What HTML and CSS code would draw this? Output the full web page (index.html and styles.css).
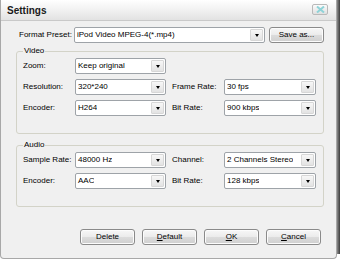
FILE: index.html
```html
<!DOCTYPE html>
<html>
<head>
<meta charset="utf-8">
<link rel="stylesheet" href="styles.css">
</head>
<body>
<div class="screen">
  <div class="window">
    <div class="titlebar">
      <span class="title">Settings</span>
      <span class="close">
        <svg width="9" height="7" viewBox="0 0 9 7"><path d="M1 0.5 L8 6.5 M8 0.5 L1 6.5" stroke="#8fd3d8" stroke-width="2"/></svg>
      </span>
    </div>
    <div class="content">
      <div class="preset-row">
        <span class="label preset-label">Format Preset:</span>
        <div class="combo preset-combo"><span class="val">iPod Video MPEG-4(*.mp4)</span><span class="arrow"></span></div>
        <div class="btn save-btn">Save as...</div>
      </div>

      <div class="group video">
        <span class="legend">Video</span>
        <div class="grid">
          <span class="label">Zoom:</span>
          <div class="combo"><span class="val">Keep original</span><span class="arrow"></span></div>
          <span></span><span></span>

          <span class="label">Resolution:</span>
          <div class="combo"><span class="val">320*240</span><span class="arrow"></span></div>
          <span class="label label2">Frame Rate:</span>
          <div class="combo"><span class="val">30 fps</span><span class="arrow"></span></div>

          <span class="label">Encoder:</span>
          <div class="combo"><span class="val">H264</span><span class="arrow"></span></div>
          <span class="label label2">Bit Rate:</span>
          <div class="combo"><span class="val">900 kbps</span><span class="arrow"></span></div>
        </div>
      </div>

      <div class="group audio">
        <span class="legend">Audio</span>
        <div class="grid">
          <span class="label">Sample Rate:</span>
          <div class="combo"><span class="val">48000 Hz</span><span class="arrow"></span></div>
          <span class="label label2">Channel:</span>
          <div class="combo"><span class="val">2 Channels Stereo</span><span class="arrow"></span></div>

          <span class="label">Encoder:</span>
          <div class="combo"><span class="val">AAC</span><span class="arrow"></span></div>
          <span class="label label2">Bit Rate:</span>
          <div class="combo"><span class="val">128 kbps</span><span class="arrow"></span></div>
        </div>
      </div>

      <div class="buttons">
        <div class="btn">Delete</div>
        <div class="btn"><u>D</u>efault</div>
        <div class="btn"><u>O</u>K</div>
        <div class="btn"><u>C</u>ancel</div>
      </div>
    </div>
  </div>
  <div class="edge"></div>
</div>
</body>
</html>
```

FILE: styles.css
```css
* { box-sizing: border-box; }
html, body { margin: 0; padding: 0; background: #ffffff; }
body {
  font-family: "Liberation Sans", Arial, sans-serif;
  font-size: 8px;
  color: #000;
  width: 340px;
  height: 261px;
  overflow: hidden;
}
.screen {
  display: flex;
  align-items: flex-start;
}
.window {
  width: 337px;
  height: 259px;
  background: #f0f0f0;
  border: 1px solid #a8a8a8;
  border-top: none;
  border-radius: 0 0 4px 4px;
  display: flex;
  flex-direction: column;
}
.edge {
  width: 3px;
  height: 254px;
  background: linear-gradient(to right, #8a8a8a, #3c3c3c);
}
.titlebar {
  height: 21px;
  background: linear-gradient(to bottom, #ffffff 0%, #f4f4f4 40%, #e2e2e2 100%);
  border-bottom: 1px solid #c9c9c9;
  display: flex;
  align-items: center;
  justify-content: space-between;
  padding: 0 8px 0 6px;
}
.title {
  font-weight: bold;
  font-size: 10px;
  color: #1a1a1a;
}
.close {
  width: 16px;
  height: 11px;
  border: 1px solid #b9b9b9;
  border-radius: 2px;
  background: linear-gradient(to bottom, #fbfbfb, #e0e0e0);
  display: flex;
  align-items: center;
  justify-content: center;
  margin-top: -1px;
}
.content {
  padding: 6px 0 0 15px;
  display: flex;
  flex-direction: column;
}
.preset-row {
  display: flex;
  align-items: center;
  height: 16px;
}
.label {
  line-height: 16px;
  white-space: nowrap;
}
.preset-label {
  width: 58px;
  padding-left: 3px;
}
.combo {
  height: 16px;
  background: #fff;
  border: 1px solid #9ea3a8;
  border-radius: 2px;
  display: flex;
  align-items: stretch;
  justify-content: space-between;
}
.combo .val {
  line-height: 14px;
  padding-left: 2px;
  white-space: nowrap;
  overflow: hidden;
}
.combo .arrow {
  width: 13px;
  margin: 1px;
  border: 1px solid #d7d7d7;
  border-radius: 1px;
  background: linear-gradient(to bottom, #f7f7f7, #e3e3e3);
  display: flex;
  align-items: center;
  justify-content: center;
}
.combo .arrow::after {
  content: "";
  width: 0;
  height: 0;
  border-left: 2.5px solid transparent;
  border-right: 2.5px solid transparent;
  border-top: 3px solid #000;
}
.preset-combo { width: 191px; }
.btn {
  width: 55px;
  height: 16px;
  border: 1px solid #8a8a8a;
  border-radius: 3px;
  background: linear-gradient(to bottom, #f7f7f7 0%, #ebebeb 50%, #dcdcdc 51%, #cfcfcf 100%);
  text-align: center;
  line-height: 14px;
  box-shadow: inset 0 0 0 1px #fcfcfc;
}
.save-btn {
  margin-left: 4px;
}
.group {
  width: 308px;
  border: 1px solid #d3d3c8;
  border-radius: 3px;
  display: flex;
  flex-direction: column;
  padding: 0 6px 0 6px;
}
.legend {
  align-self: flex-start;
  margin-top: -6px;
  margin-left: 0;
  padding: 0 1px;
  line-height: 10px;
  background: #f0f0f0;
}
.video {
  margin-top: 8px;
  height: 83px;
}
.audio {
  margin-top: 11px;
  height: 62px;
}
.grid {
  display: grid;
  grid-template-columns: 52px 91px 58px 92px;
  grid-auto-rows: 16px;
  row-gap: 5px;
}
.video .grid { margin-top: 2px; }
.audio .grid { margin-top: 2px; }
.label2 { padding-left: 6px; }
.buttons {
  display: flex;
  justify-content: flex-end;
  gap: 7px;
  margin-top: 22px;
  padding-right: 15px;
}
.buttons u { text-decoration: underline; }
```
